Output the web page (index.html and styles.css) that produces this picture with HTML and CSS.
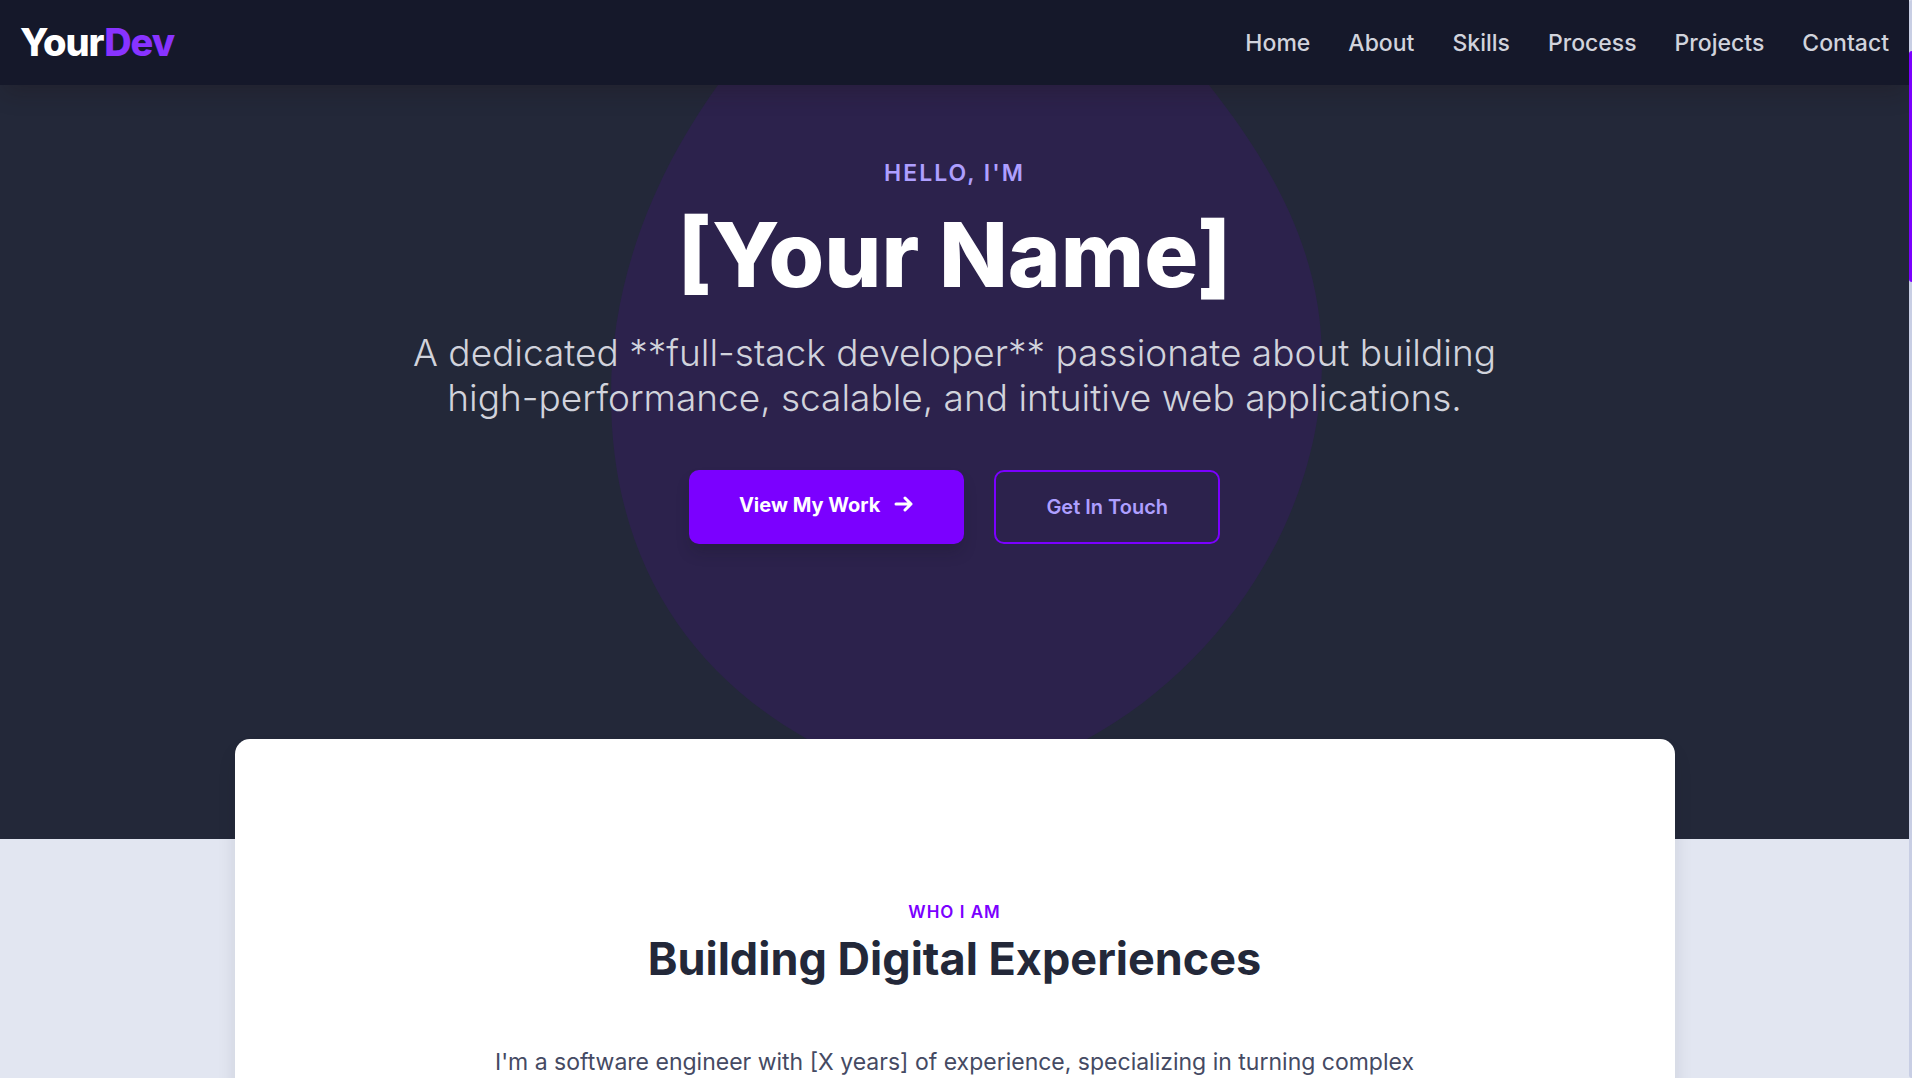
FILE: index.html
```html
<!DOCTYPE html>
<html lang="en">
<head>
<meta charset="utf-8">
<meta name="viewport" content="width=device-width, initial-scale=1">
<title>YourDev</title>
<link rel="stylesheet" href="styles.css">
</head>
<body>
<div class="page">
  <header class="site-header">
    <a class="logo" href="#home">Your<span class="logo-accent">Dev</span></a>
    <nav class="site-nav" aria-label="Main">
      <a href="#home">Home</a>
      <a href="#about">About</a>
      <a href="#skills">Skills</a>
      <a href="#process">Process</a>
      <a href="#projects">Projects</a>
      <a href="#contact">Contact</a>
    </nav>
  </header>
  <main>
    <section class="hero" id="home">
      <svg class="hero-blob" viewBox="0 0 712 754" aria-hidden="true">
        <path d="M107 0C43 89 0 195 0 310C0 470 74 585 196 654C280 700 370 705 476 654C612 580 711 430 711 275C711 165 660 79 598 0C480 -120 190 -120 107 0Z"/>
      </svg>
      <div class="hero-content">
        <p class="hero-greeting">Hello, I'm</p>
        <h1 class="hero-name">[Your Name]</h1>
        <p class="hero-intro">A dedicated **full-stack developer** passionate about building high-performance, scalable, and intuitive web applications.</p>
        <div class="hero-actions">
          <a class="button button-primary" href="#projects">View My Work
            <svg class="arrow" viewBox="0 0 20 20" aria-hidden="true"><path d="M2 10H17M11 4L17 10L11 16"/></svg>
          </a>
          <a class="button button-outline" href="#contact">Get In Touch</a>
        </div>
      </div>
    </section>
    <section class="about" id="about">
      <p class="about-label">Who I Am</p>
      <h2 class="about-title">Building Digital Experiences</h2>
      <p class="about-text">I'm a software engineer with [X years] of experience, specializing in turning complex</p>
    </section>
  </main>
</div>
<div class="scroll-track" aria-hidden="true"><div class="scroll-thumb"></div></div>
</body>
</html>
```

FILE: styles.css
```css
* { box-sizing: border-box; }

body {
  margin: 0;
  height: 100vh;
  display: flex;
  overflow: hidden;
  background: #e2e6f1;
  color: #232839;
  font-family: Inter, "Liberation Sans", sans-serif;
}

p, h1, h2 { margin: 0; }
a { text-decoration: none; }

.page { flex: 1; min-width: 0; overflow: hidden; }

.site-header {
  position: relative;
  z-index: 2;
  display: flex;
  align-items: center;
  justify-content: space-between;
  height: 85px;
  padding: 0 20px;
  background: #15182a;
  box-shadow: 0 12px 20px -4px rgba(30, 20, 20, 0.25);
}

.logo {
  padding-bottom: 2px;
  color: #fff;
  font-size: 38px;
  font-weight: 800;
  letter-spacing: -1px;
}
.logo-accent { color: #8833ff; }

.site-nav { display: flex; gap: 38px; }
.site-nav a {
  color: #d1d3dc;
  font-size: 23px;
  font-weight: 500;
}

.hero {
  position: relative;
  height: 754px;
  padding-top: 74px;
  overflow: hidden;
  background: #232839;
  text-align: center;
}
.hero-blob {
  position: absolute;
  top: 0;
  left: 32%;
  width: 712px;
  height: 754px;
  overflow: visible;
  fill: #2c224c;
}
.hero-content { position: relative; }
.hero-greeting {
  color: #ae9fff;
  font-size: 23px;
  font-weight: 600;
  line-height: 28px;
  letter-spacing: 2px;
  text-transform: uppercase;
}
.hero-name {
  margin-top: 18px;
  color: #fff;
  font-size: 90px;
  font-weight: 800;
  line-height: 100px;
}
.hero-intro {
  max-width: 1120px;
  margin: 25px auto 0;
  color: #d1d3dc;
  font-size: 37px;
  font-weight: 300;
  line-height: 45px;
}
.hero-actions {
  display: flex;
  justify-content: center;
  gap: 30px;
  margin-top: 50px;
}

.button {
  display: inline-flex;
  height: 74px;
  padding: 20px 50px;
  border-radius: 10px;
  font-size: 20px;
  line-height: 30px;
}
.button-primary {
  gap: 14px;
  background: #7b00ff;
  box-shadow: 0 10px 15px -3px rgba(20, 20, 30, 0.25);
  color: #fff;
  font-weight: 700;
}
.button-outline {
  border: 2px solid #7b00ff;
  color: #ae9fff;
  font-weight: 600;
}
.arrow {
  width: 20px;
  height: 28px;
  fill: none;
  stroke: currentColor;
  stroke-width: 3;
  stroke-linecap: round;
  stroke-linejoin: round;
}

.about {
  position: relative;
  max-width: 1440px;
  height: 600px;
  margin: -100px auto 0;
  padding: 160px 80px 0;
  border-radius: 15px;
  background: #fff;
  box-shadow: 0 12px 20px -2px rgba(21, 24, 42, 0.12);
  text-align: center;
}
.about-label {
  color: #7b00ff;
  font-size: 17px;
  font-weight: 600;
  line-height: 26px;
  letter-spacing: 1px;
  text-transform: uppercase;
}
.about-title {
  margin-top: 6px;
  font-size: 45px;
  font-weight: 700;
  line-height: 56px;
}
.about-text {
  margin-top: 57px;
  color: #454a63;
  font-size: 23px;
  line-height: 36px;
}

.scroll-track {
  width: 3px;
  padding-top: 51px;
  border-radius: 3px 0 0 3px;
  background: #c8cee4;
}
.scroll-thumb {
  height: 231px;
  border-radius: 3px 0 0 3px;
  background: #7b00ff;
}
```
